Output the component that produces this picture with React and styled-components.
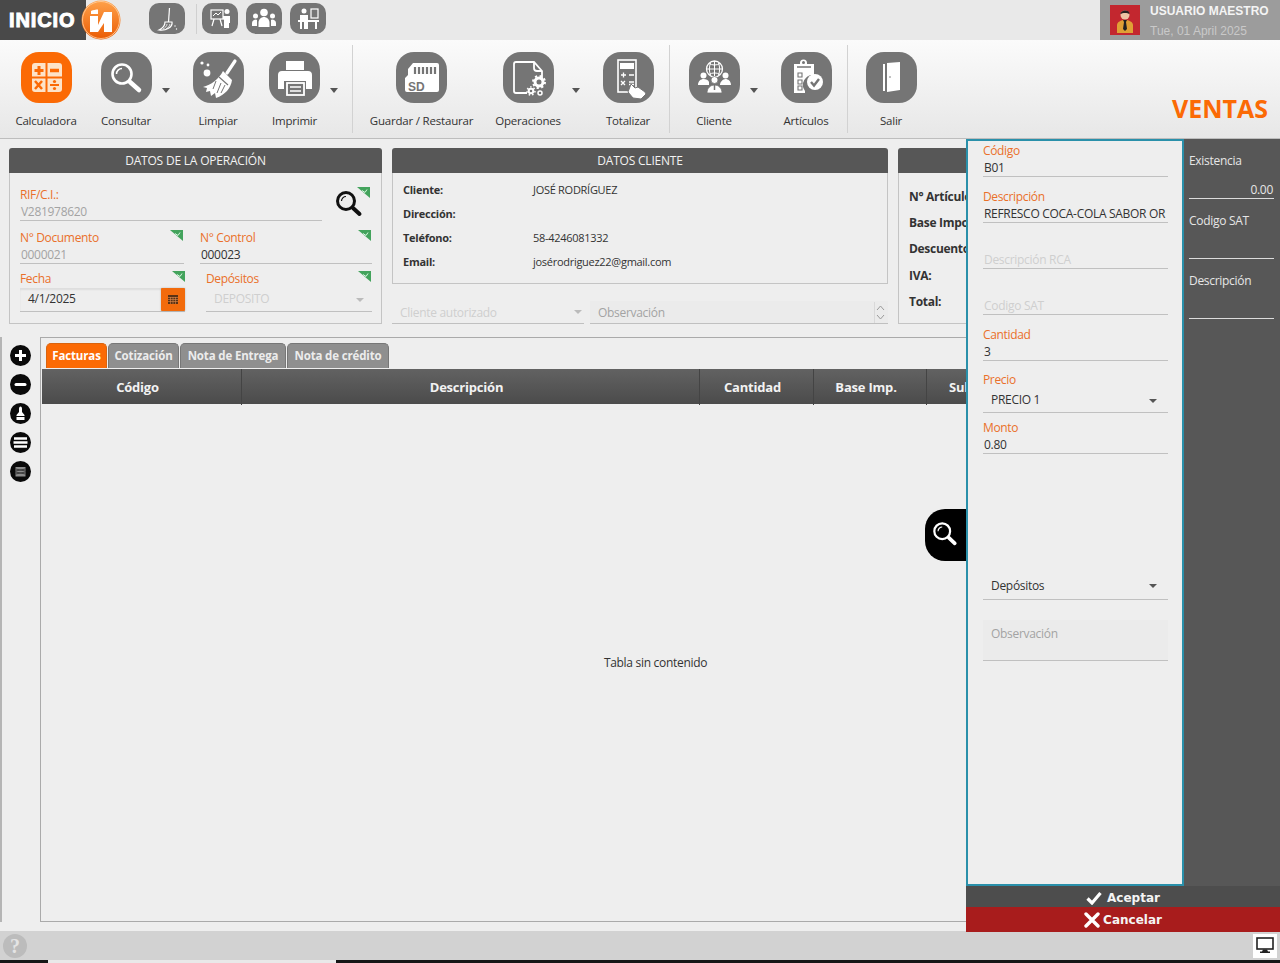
import React from 'react';
import styled, { createGlobalStyle, css } from 'styled-components';

const Global = createGlobalStyle`
  html, body { margin: 0; padding: 0; height: 963px; overflow: hidden; background: #eee; }
  body { font-family: "Open Sans", "Noto Sans", sans-serif; font-size: 12px; color: #333; }
  * { box-sizing: border-box; }
`;

const Page = styled.div`
  width: 1280px; height: 963px; display: flex; flex-direction: column; position: relative; overflow: hidden;
`;
const TopBar = styled.header`
  height: 40px; flex: none; background: #e9e9e9; display: flex; align-items: stretch;
`;
const Brand = styled.div`
  width: 86px; flex: none; background: #494949; position: relative; display: flex; align-items: center; padding-left: 9px;
`;
const BrandText = styled.span`
  font-family: "Liberation Sans", sans-serif; font-weight: 700; font-size: 20px; color: #fff; letter-spacing: 0.9px;
  -webkit-text-stroke: 1px #fff;
`;
const Logo = styled.svg`
  position: absolute; left: 79px; top: 0; width: 42px; height: 40px;
`;
const Quick = styled.div`
  display: flex; align-items: center; margin-left: 63px; height: 37px;
`;
const QuickBtn = styled.div`
  width: 36px; height: 31px; border-radius: 10px; background: #757575; margin-right: 8px;
  svg { display: block; width: 36px; height: 31px; }
`;
const QuickSep = styled.div`
  width: 1px; height: 30px; background: #d0d0d0; margin: 0 5px 0 3px;
`;
const UserBox = styled.div`
  margin-left: auto; width: 180px; background: #9c9c9c; display: flex; padding: 5px 0 0 10px;
`;
const Avatar = styled.svg`
  width: 30px; height: 30px; flex: none;
`;
const UserText = styled.div`
  margin-left: 10px; font-family: "Liberation Sans", sans-serif; font-size: 12px; line-height: 20px; margin-top: -4px;
`;
const UserName = styled.div` color: #f4f4f4; font-weight: 700; `;
const UserDate = styled.div` color: #c9c9c9; `;

const Ribbon = styled.nav`
  height: 99px; flex: none; display: flex; border-bottom: 1px solid #bdbdbd; padding-top: 5px;
  background: linear-gradient(#fbfbfb, #e7e7e7);
  position: relative;
`;
const Group = styled.div`
  display: flex; height: 88px; flex: none; width: ${p => p.$w}px; padding-left: ${p => p.$pl}px;
  border-right: 1px solid #d2d2d2;
  ${p => p.$last && css`border-right: none;`}
`;
const Tool = styled.div`
  width: ${p => p.$w}px; margin-left: ${p => p.$ml || 0}px; flex: none; display: flex; flex-direction: column; align-items: center;
  padding-top: 7px;
`;
const ToolIcon = styled.div`
  width: 51px; height: 51px; border-radius: 18px; position: relative; flex: none;
  background: ${p => (p.$active ? '#fb6a05' : '#757575')};
  svg.glyph { display: block; width: 51px; height: 51px; }
`;
const Caret = styled.span`
  position: absolute; top: 36px; left: calc(100% + ${p => p.$far ? 18 : 10}px); width: 0; height: 0;
  border-left: 4px solid transparent; border-right: 4px solid transparent; border-top: 5px solid #555;
`;
const ToolLabel = styled.div`
  margin-top: 9px; font-size: 11.5px; line-height: 17px; color: #333; white-space: nowrap; letter-spacing: -0.2px;
`;
const ModuleTitle = styled.div`
  position: absolute; right: 12px; bottom: 15px; font-size: 25px; line-height: 30px; font-weight: 700; color: #fb6a05;
`;

const Main = styled.main`
  flex: 1; min-height: 0; background: #eee; display: flex; flex-direction: column; padding-top: 9px;
`;
const CardsRow = styled.div`
  display: grid; grid-template-columns: 373px 496px 1fr; column-gap: 10px; margin: 0 10px 0 9px; height: 176px; flex: none;
`;
const Card = styled.section`
  display: flex; flex-direction: column; height: ${p => p.$h}px;
`;
const CardHead = styled.h2`
  height: 25px; flex: none; margin: 0; background: #575757; color: #f2f2f2; font-weight: 400; font-size: 12px; line-height: 25px;
  text-align: center; border-radius: 3px 3px 0 0; letter-spacing: -0.2px;
`;
const CardBody = styled.div`
  flex: 1; border: 1px solid #c4c4c4; border-top: none; padding: ${p => p.$pad};
`;
const OpRow = styled.div`
  display: flex; margin-top: ${p => p.$mt || 0}px; position: relative;
`;
const Field = styled.div`
  position: relative; flex: none; width: ${p => (p.$w ? p.$w + 'px' : '100%')};
  margin-top: ${p => p.$mt || 0}px; margin-left: ${p => p.$ml || 0}px;
`;
const Label = styled.div`
  height: 17px; line-height: 16px; font-size: 12px; color: #ea702a; letter-spacing: -0.35px;
`;
const Value = styled.div`
  height: ${p => (p.$h || 16) + 1}px; line-height: ${p => p.$lh || p.$h || 16}px; padding-left: ${p => p.$pl ?? 1}px;
  font-size: 12px; letter-spacing: -0.3px; white-space: nowrap; overflow: hidden; position: relative;
  border-bottom: 1px solid #c0c0c0;
  text-align: ${p => p.$right ? 'right' : 'left'};
  color: ${p => ({ dim: '#a3a3a3', faint: '#cfcfcf', dark: '#333' }[p.$tone || 'dark'])};
  ${p => p.$fill && css`background: #ebebeb;`}
  ${p => p.$inset && css`box-shadow: inset 0 2px 2px rgba(0,0,0,.07);`}
`;
const Flag = styled.svg`
  position: absolute; width: 13px; height: 11px; right: ${p => p.$r || 0}px; top: ${p => p.$t || 0}px;
`;
const SearchMark = styled.div`
  position: absolute; left: 315px; top: 3px; width: 28px; height: 28px;
`;
const DropCaret = styled.span`
  position: absolute; right: ${p => p.$r || 8}px; top: 50%; margin-top: -2px; width: 0; height: 0;
  border-left: 4px solid transparent; border-right: 4px solid transparent;
  border-top: 4px solid ${p => p.$c || '#555'};
`;
const CalendarBtn = styled.div`
  position: absolute; right: 0; bottom: 1px; width: 24px; height: 23px; background: #f26b0c; border-radius: 1px;
  display: flex; align-items: center; justify-content: center; box-shadow: 0 0 2px rgba(0,0,0,.25);
`;
const InfoTable = styled.div`
  display: grid; grid-template-columns: 130px 1fr; row-gap: 0; padding: 5px 0 0 10px;
`;
const InfoKey = styled.div`
  height: 24px; line-height: 24px; font-size: 11px; font-weight: 700; color: #333; letter-spacing: -0.25px;
`;
const InfoVal = styled.div`
  height: 24px; line-height: 24px; font-size: 11px; color: #333; letter-spacing: -0.28px;
`;
const ClientExtras = styled.div`
  display: grid; grid-template-columns: 192px 298px; column-gap: 6px; margin-top: 17px;
`;
const Spin = styled.svg`
  position: absolute; right: 2px; top: 1px; width: 12px; height: 21px;
`;
const Totals = styled.div`
  padding: 11px 0 0 10px;
`;
const TotalKey = styled.div`
  height: 26.2px; line-height: 26px; font-size: 12px; font-weight: 700; color: #333; letter-spacing: -0.3px;
`;

const Workspace = styled.div`
  flex: 1; min-height: 0; display: flex; margin: 13px 10px 9px 0;
`;
const SideTools = styled.div`
  width: 40px; flex: none; border-left: 2px solid #b5b5b5; display: flex; flex-direction: column; align-items: center;
  padding: 8px 0 0 0; gap: 8px; margin-left: 0;
  svg { width: 21px; height: 21px; display: block; margin-left: -1px; }
`;
const TablePanel = styled.div`
  flex: 1; min-width: 0; border: 1px solid #aaa; padding: 5px 0 0 1px; display: flex; flex-direction: column;
`;
const Tabs = styled.div`
  display: flex; height: 25px; flex: none; margin-left: 4px; gap: 1px;
`;
const Tab = styled.div`
  width: ${p => p.$w}px; height: 25px; border-radius: 5px 5px 0 0; text-align: center; line-height: 24px;
  font-size: 11.5px; font-weight: 700; letter-spacing: -0.15px; color: ${p => p.$on ? '#fff' : '#ececec'};
  background: ${p => p.$on ? '#fb6a05' : '#8f8f8f'}; border: 1px solid ${p => p.$on ? '#d9640f' : '#777'}; border-bottom: none;
`;
const TableHead = styled.div`
  margin-top: 1px; height: 35px; flex: none; display: grid; grid-template-columns: 200px 458px 114px 113px 1fr;
  background: linear-gradient(#626262, #4b4b4b);
`;
const HeadCell = styled.div`
  text-align: ${p => p.$left ? 'left' : 'center'}; padding: ${p => p.$left ? '0 0 0 22px' : '0 8px 0 0'}; line-height: 36px; font-size: 13px; font-weight: 700; color: #f2f2f2;
  border-right: 1px solid #444; letter-spacing: -0.2px;
`;
const TableEmpty = styled.div`
  flex: 1; display: flex; align-items: center; justify-content: center; font-size: 12px; color: #333; letter-spacing: -0.3px;
`;

const StatusBar = styled.footer`
  height: 29px; flex: none; background: #d2d2d2; display: flex; align-items: center; justify-content: space-between; padding: 0 3px;
`;
const Help = styled.div`
  width: 24px; height: 24px; border-radius: 50%; background: #bcbcbc; color: #e4e4e4; text-align: center;
  font: 700 20px/24px "Liberation Serif", serif;
`;
const MonitorBtn = styled.div`
  width: 24px; height: 24px; background: #fff; display: flex; align-items: center; justify-content: center;
`;
const Taskbar = styled.div`
  height: 3px; flex: none; background: #161616; padding-left: 48px;
`;
const TaskItem = styled.div`
  width: 288px; height: 3px; background: #e9e9e9;
`;

const SidePanel = styled.aside`
  position: absolute; left: 966px; right: 0; top: 139px; height: 793px; display: flex; flex-direction: column; background: #575757;
`;
const PanelTop = styled.div`
  flex: 1; min-height: 0; display: flex;
`;
const Form = styled.div`
  width: 218px; flex: none; background: #eee; border: 2px solid #2a90aa; padding: 2px 14px 0 15px; height: 747px;
`;
const PanelInfo = styled.div`
  flex: 1; padding: 12px 6px 0 5px;
`;
const InfoBlock = styled.div`
  height: 48px; border-bottom: 1px solid #dcdcdc; margin-bottom: 12px; color: #e6e6e6; font-size: 12px; line-height: 20px; letter-spacing: -0.3px;
  display: flex; flex-direction: column; justify-content: space-between;
`;
const InfoNum = styled.div` text-align: right; line-height: 16px; padding-right: 1px; `;
const Action = styled.div`
  height: ${p => p.$h}px; flex: none; background: ${p => p.$bg}; display: flex; align-items: center; justify-content: center; gap: ${p => p.$gap}px;
  color: #f4f4f4; font-weight: 700; font-size: 12px; font-family: "DejaVu Sans", sans-serif;
  padding-top: ${p => p.$pt || 0}px;
  svg { display: block; }
`;
const FloatSearch = styled.div`
  position: absolute; left: -41px; top: 370px; width: 41px; height: 52px; background: #000; border-radius: 20px 0 0 20px;
  display: flex; align-items: center; justify-content: center; padding: 0 2px 2px 0;
`;

const W = '#fff';
const G = '#757575';

const Glyph = ({ children }) => <svg className="glyph" viewBox="0 0 51 51">{children}</svg>;

const CalcIcon = () => (
  <Glyph>
    <rect x="11" y="11" width="30" height="29" rx="3" fill="#fde3c8" />
    <path d="M25.5 11v29M11 25.5h30" stroke="#fb6a05" strokeWidth="2" />
    <path d="M18 14v9M13.5 18.5h9" stroke="#fb6a05" strokeWidth="3" />
    <path d="M29 18.5h9" stroke="#fb6a05" strokeWidth="3.5" />
    <path d="M14 29l7 8M21 29l-7 8" stroke="#fb6a05" strokeWidth="2.5" />
    <path d="M29 33h9" stroke="#fb6a05" strokeWidth="2" />
    <circle cx="33.5" cy="29.5" r="1.6" fill="#fb6a05" /><circle cx="33.5" cy="36.5" r="1.6" fill="#fb6a05" />
  </Glyph>
);
const SearchIcon = () => (
  <Glyph>
    <circle cx="21" cy="22" r="9.5" fill="none" stroke={W} strokeWidth="2.6" />
    <path d="M15.5 22a5.5 5.5 0 0 1 5.500-5.500" fill="none" stroke={W} strokeWidth="1.5" />
    <path d="M29 30l9 8" stroke={W} strokeWidth="4.5" strokeLinecap="round" />
  </Glyph>
);
const BroomIcon = () => (
  <Glyph>
    <circle cx="9" cy="11" r="1.600" fill={W} /><circle cx="15" cy="13" r="1.400" fill={W} /><circle cx="14" cy="21" r="3.400" fill={W} />
    <path d="M42 9L34 21" stroke={W} strokeWidth="3.200" strokeLinecap="round" />
    <path d="M30 19l9 9c-1 8-7 15-16 18l-1-5-4 3-1-5-4 1 1-4-4-1c8-2 16-8 20-16z" fill={W} />
    <path d="M26 25l9 8" stroke={G} strokeWidth="1.200" />
    <path d="M23 29l-3 8M28 31l-4 10M32 33l-4 8" stroke={G} strokeWidth="1" fill="none" />
  </Glyph>
);
const PrinterIcon = () => (
  <Glyph>
    <path d="M17 9h18v9H17z" fill={W} />
    <path d="M13 19h26a4 4 0 0 1 4 4v14h-6v-8H15v8H9V23a4 4 0 0 1 4-4z" fill={W} />
    <rect x="18" y="31" width="17" height="12" fill="none" stroke={W} strokeWidth="1.800" />
    <path d="M21 35h11M21 39h11" stroke={W} strokeWidth="1.500" />
  </Glyph>
);
const SdIcon = () => (
  <Glyph>
    <path d="M17 11h24a2 2 0 0 1 2 2v25a2 2 0 0 1-2 2H11a2 2 0 0 1-2-2V26l3-3v-6z" fill={W} />
    <path d="M19 15v7M23 15v7M27 15v7M31 15v7M35 15v7M39 15v7" stroke={G} strokeWidth="2.200" />
    <text x="12" y="39" fontFamily="Liberation Sans" fontWeight="700" fontSize="12" fill={G}>SD</text>
  </Glyph>
);
const FileGearIcon = () => (
  <Glyph>
    <path d="M13 10h18l8 9v9M13 10a2 2 0 0 0-2 2v27a2 2 0 0 0 2 2h11" fill="none" stroke={W} strokeWidth="1.800" />
    <path d="M31 10v6a3 3 0 0 0 3 3h5" fill="none" stroke={W} strokeWidth="1.800" />
    <circle cx="36" cy="30" r="4" fill="none" stroke={W} strokeWidth="3" />
    <circle cx="36" cy="30" r="6" fill="none" stroke={W} strokeWidth="2" strokeDasharray="2.200 2.500" />
    <circle cx="28" cy="39" r="2.300" fill="none" stroke={W} strokeWidth="2" />
    <circle cx="28" cy="39" r="4" fill="none" stroke={W} strokeWidth="1.500" strokeDasharray="1.500 2" />
    <circle cx="37" cy="41" r="2" fill="none" stroke={W} strokeWidth="1.500" />
  </Glyph>
);
const CalcHandIcon = () => (
  <Glyph>
    <rect x="15" y="8" width="18" height="32" fill="none" stroke={W} strokeWidth="1.600" />
    <rect x="17" y="11" width="14" height="6" fill={W} />
    <path d="M18 23h5M20.500 20.500v5M26 23h5M18 29l4 4M22 29l-4 4M26 30h5M26 32.500h5" stroke={W} strokeWidth="1.300" />
    <path d="M28 32l4 4 3-1 7 5 1 2-5 5-8-1-5-6z" fill={W} stroke={G} strokeWidth="1" />
  </Glyph>
);
const ClientIcon = () => (
  <Glyph>
    <circle cx="25.500" cy="17" r="8" fill="none" stroke={W} strokeWidth="1.300" />
    <path d="M17.500 17h16M25.500 9v16M20 11.500c3 2 8 2 11 0M20 22.500c3-2 8-2 11 0M21.500 11c-1.500 4-1.500 8 0 12M29.500 11c1.500 4 1.500 8 0 12" stroke={W} strokeWidth="1" fill="none" />
    <circle cx="14.500" cy="23.500" r="3" fill={W} /><circle cx="36.500" cy="23.500" r="3" fill={W} />
    <path d="M9 33c0-4 3-6 5.500-6s5 1 5.500 3v3zM31 33c0-3 3-6 5.500-6s5.500 2 5.500 6z" fill={W} />
    <circle cx="25.500" cy="28" r="3.500" fill={W} stroke={G} strokeWidth=".8" />
    <path d="M18 41c0-5 3.500-8 7.500-8s7.500 3 7.500 8z" fill={W} stroke={G} strokeWidth=".8" />
    <path d="M25.500 33v5" stroke={G} strokeWidth="1.500" />
  </Glyph>
);
const ClipboardIcon = () => (
  <Glyph>
    <path d="M13 12h6v-1a3.500 3.500 0 0 1 7 0v1h7v11a10 10 0 0 0-9 16v2H13z" fill={W} />
    <circle cx="22.500" cy="10.500" r="1.500" fill={G} />
    <path d="M16 15h14" stroke={G} strokeWidth="1.500" />
    <path d="M17 21h4v4h-4zM17 28h4v4h-4zM17 34h4v4h-4z" fill="none" stroke={G} strokeWidth="1.100" />
    <circle cx="34" cy="30" r="8" fill={W} />
    <path d="M30 30l3 3.500 5-6.500" fill="none" stroke={G} strokeWidth="2.400" />
  </Glyph>
);
const DoorIcon = () => (
  <Glyph>
    <path d="M17 12h2v27h-2z" fill={W} />
    <path d="M21 11l13 -1v28l-13 2z" fill={W} />
    <circle cx="24" cy="25" r=".8" fill={G} />
  </Glyph>
);

const SweepQuick = () => (
  <svg viewBox="0 0 36 31">
    <path d="M20.500 5L19.500 19" stroke={W} strokeWidth="1.200" />
    <path d="M16 19h7c1 5-6 9-13 8 4-2 6-4 6-8z" fill="none" stroke={W} strokeWidth="1.200" />
    <path d="M18 21c0 2-2 4-4 5M21 21c-.5 2-2 4-4 5" stroke={W} strokeWidth=".8" fill="none" />
    <circle cx="26" cy="23" r=".7" fill={W} /><circle cx="27.500" cy="26" r=".7" fill={W} />
  </svg>
);
const TeachQuick = () => (
  <svg viewBox="0 0 36 31">
    <rect x="9" y="7" width="12" height="9" fill="none" stroke={W} strokeWidth="1.200" />
    <path d="M11 13l3-3 2 2 3-3" stroke={W} strokeWidth="1" fill="none" />
    <path d="M12 16l-2 7M18 16l2 7" stroke={W} strokeWidth="1.200" />
    <circle cx="25" cy="8.500" r="2.500" fill={W} />
    <path d="M21 13h7v7h-1v5h-5v-8l-1-1z" fill={W} />
  </svg>
);
const UsersQuick = () => (
  <svg viewBox="0 0 36 31">
    <circle cx="18" cy="9.500" r="3.800" fill={W} /><circle cx="9.500" cy="13" r="2.500" fill={W} /><circle cx="26.500" cy="13" r="2.500" fill={W} />
    <path d="M12.500 24v-4c0-4 3-6 5.500-6s5.500 2 5.500 6v4z" fill={W} />
    <path d="M6 23v-3c0-2 2-3.500 4-3.500l1 .5v6zM30 23v-3c0-2-2-3.500-4-3.500l-1 .5v6z" fill={W} />
  </svg>
);
const DeskQuick = () => (
  <svg viewBox="0 0 36 31">
    <rect x="21" y="6" width="7" height="9" fill="none" stroke={W} strokeWidth="1.200" />
    <circle cx="14" cy="8" r="2.500" fill={W} />
    <path d="M10 12h8v5h-2v2h-4v-2h-2z" fill={W} />
    <path d="M8 17h21v2H8zM10 19v7h2v-7zM25 19v7h2v-7z" fill={W} />
    <path d="M14 19h4v7h-4z" fill={W} />
  </svg>
);

const GreenFlag = (props) => (
  <Flag viewBox="0 0 13 11" {...props}>
    <path d="M0 0h13v11z" fill="#43a35c" />
    <path d="M5 3.500l3 2 2-3" stroke="#eafff0" strokeWidth=".9" fill="none" />
  </Flag>
);

const Magnifier = ({ size, color, hi, weight }) => (
  <svg width={size} height={size} viewBox="0 0 28 28">
    <circle cx="11" cy="11" r="8.500" fill="none" stroke={color} strokeWidth={weight} />
    <path d="M6.500 11a4.500 4.500 0 0 1 4.500-4.500" fill="none" stroke={hi} strokeWidth="1.200" />
    <path d="M18 18l6.500 6" stroke={color} strokeWidth="4" strokeLinecap="round" />
  </svg>
);

const tools = [
  { group: 0, label: 'Calculadora', w: 76, icon: <CalcIcon />, active: true },
  { group: 0, label: 'Consultar', w: 84, icon: <SearchIcon />, caret: true },
  { group: 0, label: 'Limpiar', w: 100, icon: <BroomIcon /> },
  { group: 0, label: 'Imprimir', w: 53, icon: <PrinterIcon />, caret: true },
  { group: 1, label: 'Guardar / Restaurar', w: 109, icon: <SdIcon /> },
  { group: 1, label: 'Operaciones', w: 90, ml: 7, icon: <FileGearIcon />, caret: true, far: true },
  { group: 1, label: 'Totalizar', w: 80, ml: 15, icon: <CalcHandIcon /> },
  { group: 2, label: 'Cliente', w: 70, icon: <ClientIcon />, caret: true },
  { group: 2, label: 'Artículos', w: 70, ml: 22, icon: <ClipboardIcon /> },
  { group: 3, label: 'Salir', w: 60, icon: <DoorIcon /> },
];
const groups = [
  { w: 353, pl: 8 },
  { w: 317, pl: 14 },
  { w: 178, pl: 9 },
  { w: 100, pl: 13, last: true },
];

const clientRows = [
  ['Cliente:', 'JOSÉ RODRÍGUEZ'],
  ['Dirección:', ''],
  ['Teléfono:', '58-4246081332'],
  ['Email:', 'josérodriguez22@gmail.com'],
];
const tabs = [
  { t: 'Facturas', w: 61, on: true },
  { t: 'Cotización', w: 71 },
  { t: 'Nota de Entrega', w: 106 },
  { t: 'Nota de crédito', w: 102 },
];

const Circle = ({ children }) => (
  <svg viewBox="0 0 21 21"><circle cx="10.500" cy="10.500" r="10.500" fill="#0a0a0a" />{children}</svg>
);

export default function App() {
  return (
    <Page>
      <Global />
      <TopBar>
        <Brand>
          <BrandText>INICIO</BrandText>
          <Logo viewBox="0 0 42 40">
            <defs>
              <linearGradient id="lg" x1="0" y1="0" x2="0" y2="1">
                <stop offset="0" stopColor="#ffa24a" /><stop offset="1" stopColor="#ea5c05" />
              </linearGradient>
            </defs>
            <circle cx="22" cy="20" r="19.500" fill="url(#lg)" />
            <circle cx="22" cy="20" r="18.500" fill="none" stroke="#ffd3a6" strokeWidth=".8" />
            <path d="M12 11c2-1 5-1.500 7-1.500v4.500h-7z" fill="#fff" />
            <path d="M11 16h8v9l6-13h8v20h-8v-9l-6 9h-8z" fill="#fff" />
          </Logo>
        </Brand>
        <Quick>
          <QuickBtn><SweepQuick /></QuickBtn>
          <QuickSep />
          <QuickBtn><TeachQuick /></QuickBtn>
          <QuickBtn><UsersQuick /></QuickBtn>
          <QuickBtn><DeskQuick /></QuickBtn>
        </Quick>
        <UserBox>
          <Avatar viewBox="0 0 30 30">
            <rect width="30" height="30" fill="#c3272f" />
            <path d="M7 28v-8c0-3 4-5 8-5s8 2 8 5v8z" fill="#e0a035" />
            <path d="M13 15h4l-1 2 1 7-2 2-2-2 1-7z" fill="#222" />
            <circle cx="15" cy="10" r="4.500" fill="#eec4a4" />
            <path d="M10.500 9c0-4 9-5 9 0-2-1.500-7-1.500-9 0z" fill="#2d2222" />
          </Avatar>
          <UserText>
            <UserName>USUARIO MAESTRO</UserName>
            <UserDate>Tue, 01 April 2025</UserDate>
          </UserText>
        </UserBox>
      </TopBar>

      <Ribbon>
        {groups.map((g, i) => (
          <Group key={i} $w={g.w} $pl={g.pl} $last={g.last}>
            {tools.filter(t => t.group === i).map(t => (
              <Tool key={t.label} $w={t.w} $ml={t.ml}>
                <ToolIcon $active={t.active}>
                  {t.icon}
                  {t.caret && <Caret $far={t.far} />}
                </ToolIcon>
                <ToolLabel>{t.label}</ToolLabel>
              </Tool>
            ))}
          </Group>
        ))}
        <ModuleTitle>VENTAS</ModuleTitle>
      </Ribbon>

      <Main>
        <CardsRow>
          <Card $h={176}>
            <CardHead>DATOS DE LA OPERACIÓN</CardHead>
            <CardBody $pad="14px 10px 0 10px">
              <OpRow>
                <Field $w={302}>
                  <Label>RIF/C.I.:</Label>
                  <Value $tone="dim">V281978620</Value>
                </Field>
                <SearchMark><Magnifier size={28} color="#111" hi="#111" weight={3} /></SearchMark>
                <GreenFlag $r={1} $t={0} />
              </OpRow>
              <OpRow $mt={9}>
                <Field $w={164}>
                  <Label>N° Documento</Label>
                  <Value $tone="dim">0000021</Value>
                  <GreenFlag $r={1} $t={0} />
                </Field>
                <Field $w={172} $ml={16}>
                  <Label>N° Control</Label>
                  <Value>000023</Value>
                  <GreenFlag $r={1} $t={0} />
                </Field>
              </OpRow>
              <OpRow $mt={7}>
                <Field $w={165}>
                  <Label>Fecha</Label>
                  <Value $h={23} $lh={21} $pl={8} $inset>4/1/2025</Value>
                  <GreenFlag $r={0} $t={0} />
                  <CalendarBtn>
                    <svg width="10" height="9" viewBox="0 0 10 9">
                      <rect width="10" height="9" fill="#5b3214" />
                      <path d="M0 2.500h10M0 4.500h10M0 6.500h10M2.500 2v7M5 2v7M7.500 2v7" stroke="#e08a4c" strokeWidth=".6" />
                    </svg>
                  </CalendarBtn>
                </Field>
                <Field $w={166} $ml={21}>
                  <Label>Depósitos</Label>
                  <Value $h={23} $lh={21} $pl={8} $tone="faint">DEPOSITO<DropCaret $r={8} $c="#bbb" /></Value>
                  <GreenFlag $r={1} $t={0} />
                </Field>
              </OpRow>
            </CardBody>
          </Card>

          <div>
            <Card $h={136}>
              <CardHead>DATOS CLIENTE</CardHead>
              <CardBody $pad="0">
                <InfoTable>
                  {clientRows.map(([k, v]) => (
                    <React.Fragment key={k}>
                      <InfoKey>{k}</InfoKey>
                      <InfoVal>{v}</InfoVal>
                    </React.Fragment>
                  ))}
                </InfoTable>
              </CardBody>
            </Card>
            <ClientExtras>
              <Field>
                <Value $h={22} $lh={24} $pl={8} $tone="faint">Cliente autorizado<DropCaret $r={2} $c="#bbb" /></Value>
              </Field>
              <Field>
                <Value $h={22} $lh={24} $pl={8} $tone="dim" $fill>Observación
                  <Spin viewBox="0 0 12 21">
                    <path d="M0 0v21" stroke="#c8c8c8" />
                    <path d="M3 8l3.500-4 3.500 4M3 13l3.500 4 3.500-4" stroke="#9a9a9a" fill="none" />
                  </Spin>
                </Value>
              </Field>
            </ClientExtras>
          </div>

          <Card $h={176}>
            <CardHead>DATOS DE TOTALES</CardHead>
            <CardBody $pad="0">
              <Totals>
                {['N° Artículos:', 'Base Imponible:', 'Descuento:', 'IVA:', 'Total:'].map(k => <TotalKey key={k}>{k}</TotalKey>)}
              </Totals>
            </CardBody>
          </Card>
        </CardsRow>

        <Workspace>
          <SideTools>
            <Circle><path d="M10.500 5v11M5 10.500h11" stroke={W} strokeWidth="3" /></Circle>
            <Circle><path d="M6 10.500h9" stroke={W} strokeWidth="3" strokeLinecap="round" /></Circle>
            <Circle><path d="M10.500 3.500c1 0 1.500 1 1.500 2.500v3l2.500 3v1h-8v-1l2.500-3V6c0-1.500.5-2.500 1.500-2.500zM6.500 14h8v3h-8z" fill={W} /></Circle>
            <Circle><path d="M4 6.500h13M3.500 10.500h14M4 14.500h13" stroke={W} strokeWidth="2.600" /></Circle>
            <Circle><path d="M5.500 6h10v9.500h-10z" fill="#8c8c8c" /><path d="M5.500 8l10 2M5.500 11l10 2M15.500 8l-10 2M15.500 11l-10 2" stroke="#2a2a2a" strokeWidth=".8" /></Circle>
          </SideTools>
          <TablePanel>
            <Tabs>
              {tabs.map(t => <Tab key={t.t} $w={t.w} $on={t.on}>{t.t}</Tab>)}
            </Tabs>
            <TableHead>
              <HeadCell>Código</HeadCell>
              <HeadCell>Descripción</HeadCell>
              <HeadCell>Cantidad</HeadCell>
              <HeadCell>Base Imp.</HeadCell>
              <HeadCell $left>Subtotal</HeadCell>
            </TableHead>
            <TableEmpty>Tabla sin contenido</TableEmpty>
          </TablePanel>
        </Workspace>
      </Main>

      <StatusBar>
        <Help>?</Help>
        <MonitorBtn>
          <svg width="18" height="17" viewBox="0 0 18 17">
            <rect x="1" y="1" width="16" height="11" fill="#fff" stroke="#222" strokeWidth="1.600" />
            <path d="M7 12.500h4l1 2H6zM4 14.500h10V16H4z" fill="#222" />
          </svg>
        </MonitorBtn>
      </StatusBar>
      <Taskbar><TaskItem /></Taskbar>

      <SidePanel>
        <FloatSearch><Magnifier size={26} color="#fff" hi="#fff" weight={2.400} /></FloatSearch>
        <PanelTop>
          <Form>
            <Field><Label>Código</Label><Value>B01</Value></Field>
            <Field $mt={12}><Label>Descripción</Label><Value>REFRESCO COCA-COLA SABOR OR</Value></Field>
            <Field $mt={29}><Value $tone="faint">Descripción RCA</Value></Field>
            <Field $mt={29}><Value $tone="faint">Codigo SAT</Value></Field>
            <Field $mt={12}><Label>Cantidad</Label><Value>3</Value></Field>
            <Field $mt={11}><Label>Precio</Label><Value $h={23} $lh={22} $pl={8}>PRECIO 1<DropCaret $r={11} /></Value></Field>
            <Field $mt={7}><Label>Monto</Label><Value>0.80</Value></Field>
            <Field $mt={118}><Value $h={27} $pl={8}>Depósitos<DropCaret $r={11} /></Value></Field>
            <Field $mt={20}><Value $h={40} $lh={28} $pl={8} $tone="dim" $fill>Observación</Value></Field>
          </Form>
          <PanelInfo>
            <InfoBlock><span>Existencia</span><InfoNum>0.00</InfoNum></InfoBlock>
            <InfoBlock><span>Codigo SAT</span></InfoBlock>
            <InfoBlock><span>Descripción</span></InfoBlock>
          </PanelInfo>
        </PanelTop>
        <Action $h={21} $pt={2} $gap={5} $bg="#4d4d4d">
          <svg width="16" height="14" viewBox="0 0 16 14"><path d="M1.500 7.500l4.500 4.500 8.500-10" fill="none" stroke="#fff" strokeWidth="3.200" /></svg>
          Aceptar
        </Action>
        <Action $h={25} $gap={3} $bg="#a81c1c">
          <svg width="16" height="16" viewBox="0 0 16 16"><path d="M2 2l12 12M14 2L2 14" stroke="#fff" strokeWidth="3.400" strokeLinecap="round" /></svg>
          Cancelar
        </Action>
      </SidePanel>
    </Page>
  );
}
